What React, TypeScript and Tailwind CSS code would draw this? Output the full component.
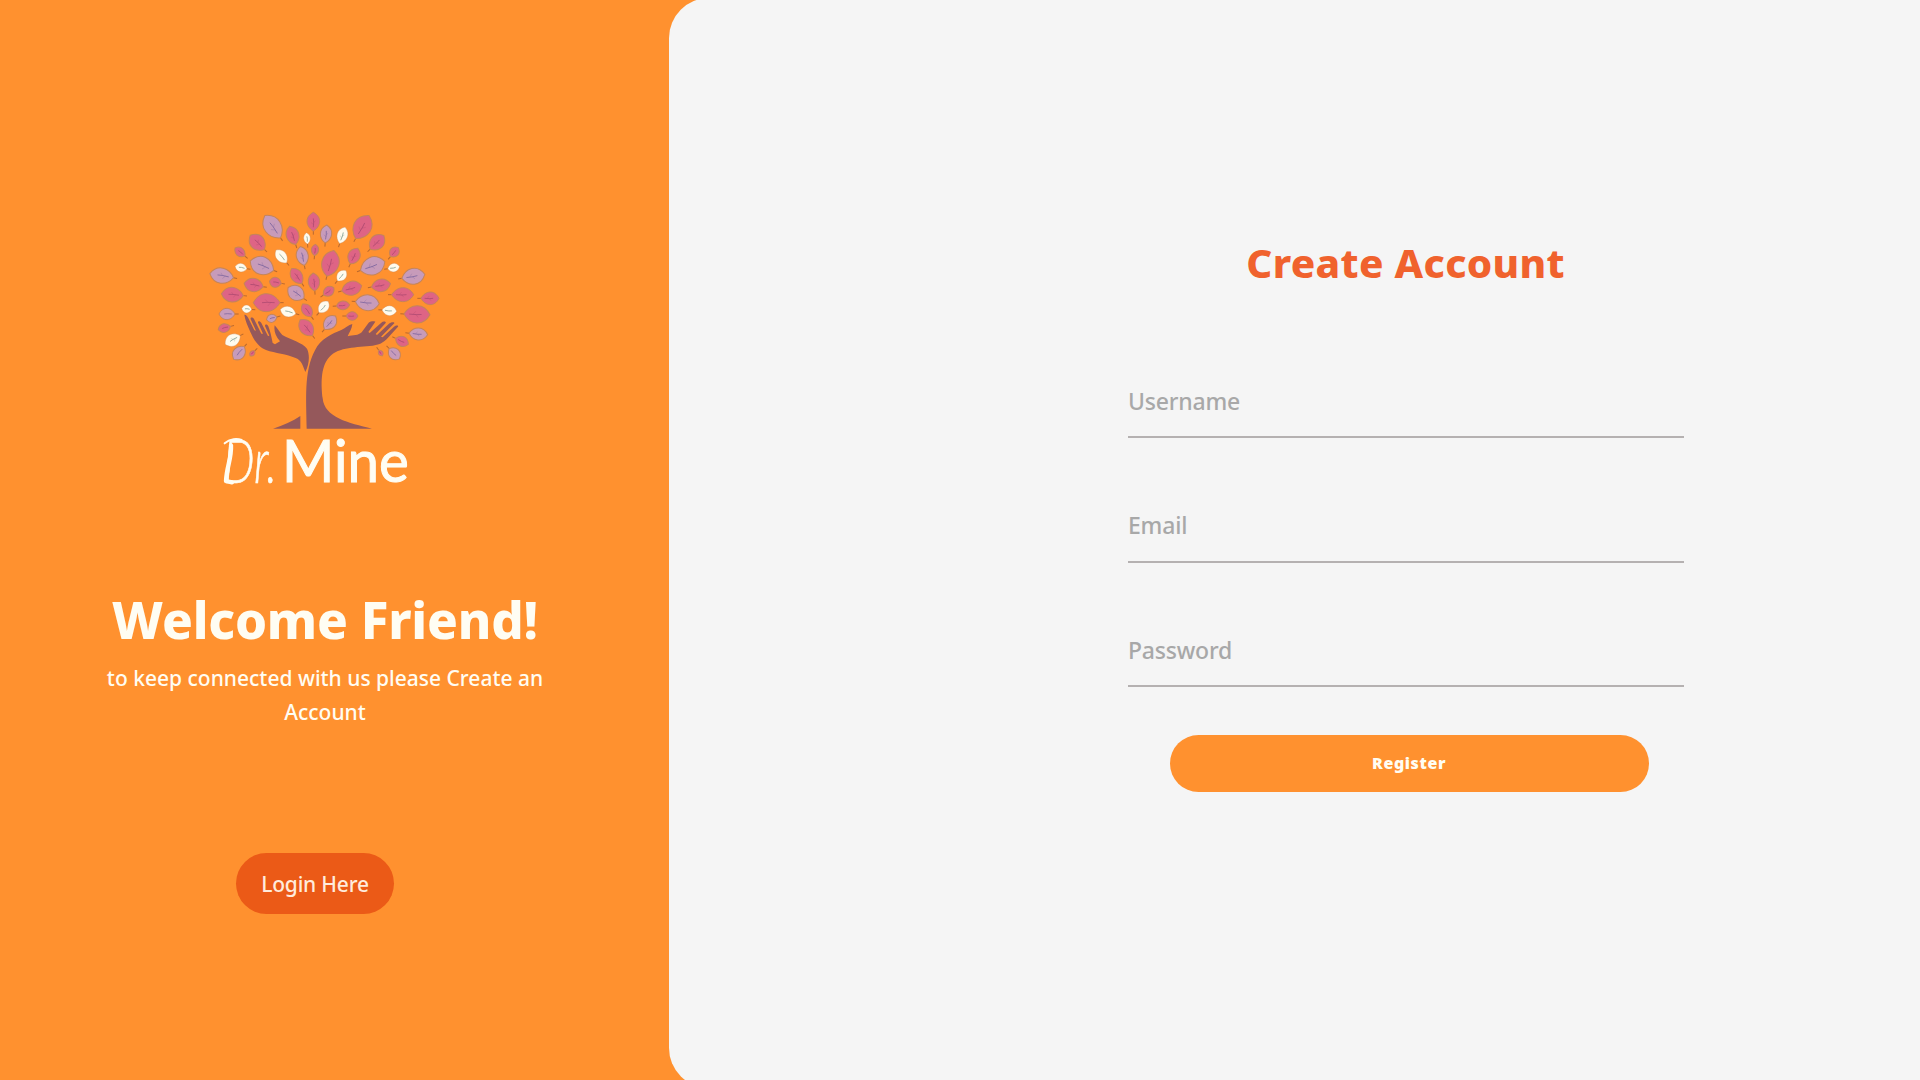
type Leaf = [number, number, number, number, number, "p" | "l" | "w"];

const fills = { p: "#de6485", l: "#c79bba", w: "#fffbee" };
const veins = { p: "#a8476f", l: "#75609c", w: "#79988c" };

// [centre x, centre y, half length, half width, stem direction, colour]
const leaves: Leaf[] = [
  [218, 80, 41, 26, 55, "l"], [172, 127, 30, 22, 45, "p"], [278, 106, 29, 19, 72, "p"],
  [340, 65, 28, 19, 90, "p"], [321, 115, 17, 10, 85, "w"], [378, 102, 27, 17, 95, "l"],
  [120, 156, 19, 13, 40, "p"], [244, 169, 25, 16, 50, "w"], [307, 168, 29, 18, 78, "l"],
  [345, 150, 17, 11, 95, "p"], [123, 203, 18, 13, 10, "w"], [186, 197, 38, 27, 22, "l"],
  [65, 227, 36, 23, 10, "l"], [161, 255, 29, 20, 10, "p"], [226, 247, 18, 15, 10, "p"],
  [290, 228, 27, 17, 55, "p"], [342, 246, 27, 17, 85, "p"], [288, 279, 29, 22, 35, "l"],
  [97, 284, 33, 22, 5, "p"], [200, 308, 40, 27, 0, "p"], [140, 327, 15, 12, 5, "w"],
  [264, 335, 24, 16, 15, "w"], [321, 331, 23, 15, 55, "p"], [81, 342, 24, 17, 0, "l"],
  [73, 384, 19, 13, -15, "p"], [98, 420, 26, 18, -30, "w"], [117, 459, 25, 18, -50, "l"],
  [157, 460, 10, 7, -45, "p"], [215, 355, 16, 12, -15, "l"], [319, 383, 30, 20, 52, "p"],
  [371, 321, 22, 15, 130, "w"], [427, 106, 26, 16, 108, "w"], [487, 81, 40, 27, 120, "p"],
  [531, 127, 29, 21, 135, "p"], [583, 156, 18, 14, 130, "p"], [462, 168, 26, 18, 115, "p"],
  [391, 190, 40, 26, 105, "p"], [518, 198, 39, 27, 160, "l"], [581, 203, 18, 13, 170, "w"],
  [425, 227, 20, 14, 130, "w"], [640, 229, 35, 24, 170, "l"], [455, 265, 31, 21, 165, "p"],
  [543, 256, 29, 19, 170, "p"], [386, 274, 19, 14, 145, "p"], [608, 284, 33, 21, 180, "p"],
  [690, 295, 27, 19, 180, "p"], [502, 308, 36, 24, 185, "l"], [429, 316, 20, 13, 175, "p"],
  [568, 332, 22, 15, 185, "w"], [651, 343, 39, 26, 182, "p"], [390, 368, 26, 18, 130, "l"],
  [456, 348, 18, 13, 180, "p"], [655, 402, 28, 18, 185, "l"], [606, 424, 21, 15, 205, "p"],
  [583, 461, 22, 17, 225, "l"], [542, 459, 10, 7, 235, "p"],
];

function TreeLogo() {
  return (
    <svg viewBox="0 0 750 900" className="h-[300px] w-[250px]" aria-label="Dr. Mine">
      {leaves.map(([x, y, a, b, r, c], i) => (
        <g key={i} transform={`translate(${x} ${y}) rotate(${r})`}>
          <path d={`M${a} 0H${a + 11}`} stroke="#b8682e" strokeWidth="3" />
          <path
            d={`M${a} 0C${a * 0.55} ${b * 1.2} ${-a * 0.5} ${b * 1.45} ${-a} 0C${-a * 0.5} ${-b * 1.45} ${a * 0.55} ${-b * 1.2} ${a} 0Z`}
            fill={fills[c]}
            stroke="#c4855a"
            strokeWidth={c === "w" ? 1 : 3}
          />
          <path d={`M${-a * 0.35} 0Q0 -2 ${a * 0.6} 0`} fill="none" stroke={veins[c]} strokeWidth="2.5" opacity="0.85" />
          {a > 25 && (
            <path d={`M${a * 0.1} 0L${-a * 0.1} ${-b * 0.35}M${a * 0.3} 0L${a * 0.1} ${b * 0.35}`} stroke={veins[c]} strokeWidth="1.5" opacity="0.5" />
          )}
        </g>
      ))}
      <g fill="#95585b" transform="translate(0 300)">
        <path d="M133 44C138 43 143 50 146 56L163 91L168 92L152 58C150 51 158 51 162 57L184 101L189 101L174 68C174 62 180 63 184 69L204 108L208 107L195 78C195 72 202 72 205 79C211 94 215 114 218 129L225 133L240 124C226 108 221 91 224 76C233 85 239 98 247 105C272 120 307 127 321 146C330 165 328 193 316 216C309 198 306 182 287 174C260 162 226 160 198 150C172 140 161 117 151 96C144 79 135 61 133 44Z" />
        <path d="M320 386C319 300 311 214 345 151C361 116 397 101 424 90C438 83 445 75 457 72C456 87 447 98 443 109C460 105 475 107 485 97L506 68C512 62 526 63 526 65L505 96L509 99L544 68C550 62 560 65 557 69L527 102L531 105L566 72C572 65 585 65 583 70L543 110L548 112L582 80C588 74 597 76 594 80L564 113C551 129 535 134 518 137C470 143 417 139 388 171C360 202 364 258 368 295C373 353 446 369 516 386Z" />
        <path d="M219 386C250 375 278 364 301 348V386Z" />
      </g>
      <text x="70" y="848" fontFamily="Lato" fontStyle="italic" fontWeight="300" fontSize="182" textLength="160" lengthAdjust="spacingAndGlyphs" fill="#fffdf3" stroke="#fffdf3" strokeWidth="2">
        Dr.
      </text>
      <path d="M74 730C90 715 112 715 125 720" fill="none" stroke="#fffdf3" strokeWidth="6" strokeLinecap="round" />
      <path d="M93 736C95 775 80 800 78 843L96 847" fill="none" stroke="#fffdf3" strokeWidth="13" strokeLinecap="round" strokeLinejoin="round" />
      <text x="246" y="846" fontFamily="Lato" fontSize="172" textLength="380" lengthAdjust="spacingAndGlyphs" fill="#fffdf3" stroke="#fffdf3" strokeWidth="3">
        Mine
      </text>
    </svg>
  );
}

function Field({ label, type }: { label: string; type: string }) {
  return (
    <input
      type={type}
      placeholder={label}
      aria-label={label}
      className="h-[71px] w-full border-b-2 border-[#b5b1b1] bg-transparent pb-[2px] text-[23px] font-medium tracking-[-0.2px] outline-none placeholder:text-[#a8a8a8]"
    />
  );
}

export default function App() {
  return (
    <div className="flex h-[1080px] w-[1920px] overflow-hidden bg-[#ff912f] font-['Noto_Sans',sans-serif]">
      <aside className="flex w-[669px] shrink-0 flex-col pt-[200px]">
        <div className="pl-[200px]"><TreeLogo /></div>
        <div className="flex w-[650px] flex-col items-center pt-[83px] text-[#fffdf3]">
          <h1 className="text-[51px] leading-[72px] font-extrabold tracking-[-0.2px] whitespace-nowrap">Welcome Friend!</h1>
          <p className="mt-[6px] w-[460px] text-center text-[21px] leading-[34px] font-medium">
            to keep connected with us please Create an Account
          </p>
        </div>
        <button className="mt-[124px] ml-[236px] h-[61px] w-[158px] rounded-full bg-[#eb5a17] pt-[2px] text-[21px] font-medium tracking-[-0.2px] whitespace-nowrap text-[#ffebdc]">
          Login Here
        </button>
      </aside>
      <main className="-mt-[2px] h-[1090px] flex-1 rounded-l-[40px] bg-[#f5f5f5] pl-[459px]">
        <form className="flex w-[556px] flex-col items-center pt-[231px]">
          <h2 className="scale-x-[1.037] text-[39px] leading-[68px] font-extrabold tracking-[0.3px] whitespace-nowrap text-[#f0622d]">Create Account</h2>
          <div className="mt-[70px] flex w-full flex-col gap-[53.5px]">
            <Field label="Username" type="text" />
            <Field label="Email" type="email" />
            <Field label="Password" type="password" />
          </div>
          <button type="button" className="mt-[48px] ml-[6px] h-[57px] w-[479px] rounded-full bg-[#ff912f] pb-[2px] text-[16px] font-black tracking-[0.6px] text-[#fffdf3]">
            Register
          </button>
        </form>
      </main>
    </div>
  );
}
